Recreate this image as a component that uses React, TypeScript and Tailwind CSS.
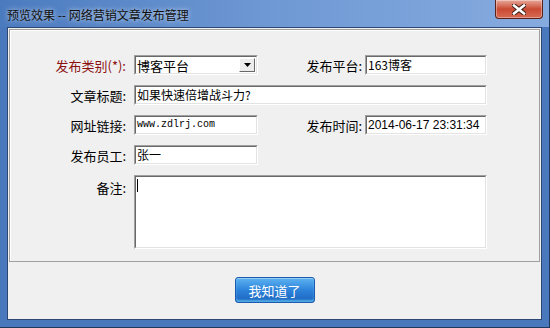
import type { ReactNode } from "react";

const cjk = "font-['SimSun','Noto_Sans_CJK_SC',sans-serif]";

function Sunken({ className, children }: { className: string; children?: ReactNode }) {
    return (
        <div className={`border border-t-[#a0a0a0] border-l-[#a0a0a0] border-b-white border-r-white ${className}`}>
            <div className="h-full w-full bg-white border border-t-[#696969] border-l-[#696969] border-b-[#e3e3e3] border-r-[#e3e3e3] flex items-center pl-[1px] overflow-hidden">
                {children}
            </div>
        </div>
    );
}

function Label({ w, children, red }: { w: string; children: ReactNode; red?: boolean }) {
    return (
        <div className={`${w} text-right text-[13px] leading-none ${red ? "text-[#8b1111]" : "text-black"}`}>
            {children}
        </div>
    );
}

export default function App() {
    return (
        <div className={`w-[550px] h-[328px] flex flex-col bg-[#4a78bd] border-r border-b border-r-[#20375e] border-b-[#20375e] ${cjk}`}>
            {/* Title bar */}
            <div className="h-[27px] flex items-start justify-between bg-gradient-to-r from-[#4b7bbf] via-[#6f99d4] to-[#86abdf]">
                <div className="pl-[7px] pt-[9px] text-[12px] leading-none text-[#101010] [text-shadow:0_0_5px_rgba(255,255,255,0.8)]">
                    预览效果 -- 网络营销文章发布管理
                </div>
                <div className="mr-[6px] w-[48px] h-[19px] rounded-b-[4px] border border-t-0 border-[#5b2018] bg-gradient-to-b from-[#e7a89b] via-[#c94a33] to-[#d76a52] shadow-[inset_0_0_0_1px_rgba(255,255,255,0.35)] flex items-center justify-center">
                    <svg width="14" height="11" viewBox="0 0 14 11">
                        <path d="M2 1.5 L12 9.5 M12 1.5 L2 9.5" stroke="#3a1a14" strokeWidth="4.5" strokeLinecap="square" />
                        <path d="M2 1.5 L12 9.5 M12 1.5 L2 9.5" stroke="#ffffff" strokeWidth="2.6" strokeLinecap="square" />
                    </svg>
                </div>
            </div>

            {/* Client area */}
            <div className="mx-[7px] h-[293px] border border-[#2d4672] bg-[#f0f0f0] flex flex-col">
                {/* Form panel */}
                <div className="mt-[1px] ml-[1px] mr-[1px] h-[233px] border border-[#a0a0a0] shadow-[inset_1px_1px_0_#ffffff] flex flex-col gap-[10px] pt-[25px]">
                    <div className="flex items-center h-[20px]">
                        <Label w="w-[116px]" red>发布类别(*):</Label>
                        <Sunken className="ml-[8px] w-[124px] h-[20px]">
                            <span className="flex-1 text-[13px] leading-none">博客平台</span>
                            <div className="mr-[1px] w-[16px] h-[14px] bg-[#ececec] border border-t-white border-l-white border-b-[#696969] border-r-[#696969] flex items-center justify-center">
                                <svg width="7" height="4" viewBox="0 0 7 4">
                                    <path d="M0 0 H7 L3.5 4 Z" fill="#000" />
                                </svg>
                            </div>
                        </Sunken>
                        <Label w="w-[104px]">发布平台:</Label>
                        <Sunken className="ml-[3px] w-[122px] h-[20px]">
                            <span className="text-[12px] leading-none">163博客</span>
                        </Sunken>
                    </div>

                    <div className="flex items-center h-[20px]">
                        <Label w="w-[116px]">文章标题:</Label>
                        <Sunken className="ml-[8px] w-[353px] h-[20px]">
                            <span className="text-[12px] leading-none">如果快速倍增战斗力?</span>
                        </Sunken>
                    </div>

                    <div className="flex items-center h-[20px]">
                        <Label w="w-[116px]">网址链接:</Label>
                        <Sunken className="ml-[8px] w-[124px] h-[20px]">
                            <span className="font-['Liberation_Mono',monospace] text-[10px] leading-none">www.zdlrj.com</span>
                        </Sunken>
                        <Label w="w-[104px]">发布时间:</Label>
                        <Sunken className="ml-[3px] w-[122px] h-[20px]">
                            <span className="font-['Liberation_Sans',sans-serif] text-[12px] leading-none">2014-06-17 23:31:34</span>
                        </Sunken>
                    </div>

                    <div className="flex items-center h-[20px]">
                        <Label w="w-[116px]">发布员工:</Label>
                        <Sunken className="ml-[8px] w-[124px] h-[20px]">
                            <span className="text-[12px] leading-none">张一</span>
                        </Sunken>
                    </div>

                    <div className="flex items-start">
                        <div className="pt-[6px]">
                            <Label w="w-[116px]">备注:</Label>
                        </div>
                        <div className="ml-[8px] w-[353px] h-[74px] border border-t-[#a0a0a0] border-l-[#a0a0a0] border-b-white border-r-white">
                            <div className="h-full bg-white border border-t-[#696969] border-l-[#696969] border-b-[#e3e3e3] border-r-[#e3e3e3] pl-[1px] pt-[2px]">
                                <div className="w-[1px] h-[13px] bg-black" />
                            </div>
                        </div>
                    </div>
                </div>

                {/* Footer button */}
                <div className="flex justify-center pt-[15px]">
                    <button className="w-[80px] h-[26px] rounded-[3px] border border-[#1b5aae] bg-gradient-to-b from-[#5db3f1] via-[#2d83da] to-[#1c63be] shadow-[inset_0_-2px_2px_rgba(120,220,255,0.6),inset_0_1px_0_rgba(255,255,255,0.35)] text-white text-[13px] leading-none">
                        我知道了
                    </button>
                </div>
            </div>
        </div>
    );
}
